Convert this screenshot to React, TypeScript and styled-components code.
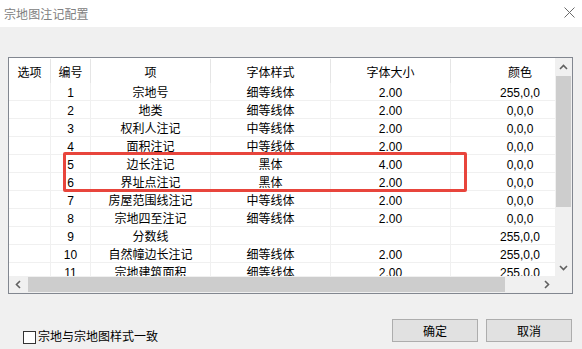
import styled, { createGlobalStyle } from "styled-components";

const GlobalStyle = createGlobalStyle`
  html, body {
    margin: 0;
    padding: 0;
    background: #f0f0f0;
  }
  * {
    box-sizing: border-box;
  }
`;

interface RowData {
  no: string;
  item: string;
  font: string;
  size: string;
  color: string;
}

const rows: RowData[] = [
  { no: "1", item: "宗地号", font: "细等线体", size: "2.00", color: "255,0,0" },
  { no: "2", item: "地类", font: "细等线体", size: "2.00", color: "0,0,0" },
  { no: "3", item: "权利人注记", font: "中等线体", size: "2.00", color: "0,0,0" },
  { no: "4", item: "面积注记", font: "中等线体", size: "2.00", color: "0,0,0" },
  { no: "5", item: "边长注记", font: "黑体", size: "4.00", color: "0,0,0" },
  { no: "6", item: "界址点注记", font: "黑体", size: "2.00", color: "0,0,0" },
  { no: "7", item: "房屋范围线注记", font: "中等线体", size: "2.00", color: "0,0,0" },
  { no: "8", item: "宗地四至注记", font: "细等线体", size: "2.00", color: "0,0,0" },
  { no: "9", item: "分数线", font: "", size: "", color: "255,0,0" },
  { no: "10", item: "自然幢边长注记", font: "细等线体", size: "2.00", color: "255,0,0" },
  { no: "11", item: "宗地建筑面积", font: "细等线体", size: "2.00", color: "255,0,0" },
];

const headers = ["选项", "编号", "项", "字体样式", "字体大小", "颜色"];

export default function App() {
  return (
    <>
      <GlobalStyle />
      <Window>
        <TitleBar>
          <Title>宗地图注记配置</Title>
          <CloseIcon width="11" height="11" viewBox="0 0 11 11">
            <path d="M0.5 0.5 L10.5 10.5 M10.5 0.5 L0.5 10.5" stroke="#6a6a6a" strokeWidth="1" />
          </CloseIcon>
        </TitleBar>

        <Body>
          <ListBox>
            <Content>
              <HeaderRow>
                {headers.map((h) => (
                  <HeaderCell key={h}>{h}</HeaderCell>
                ))}
              </HeaderRow>
              {rows.map((r) => (
                <DataRow key={r.no}>
                  <Cell />
                  <Cell>{r.no}</Cell>
                  <Cell>{r.item}</Cell>
                  <Cell>{r.font}</Cell>
                  <Cell>{r.size}</Cell>
                  <Cell>{r.color}</Cell>
                </DataRow>
              ))}
              <Highlight />
            </Content>

            <VScroll>
              <ArrowBtn>
                <svg width="9" height="6" viewBox="0 0 9 6">
                  <path d="M1 5 L4.5 1.5 L8 5" fill="none" stroke="#606060" strokeWidth="1.6" />
                </svg>
              </ArrowBtn>
              <VTrack>
                <VThumb />
              </VTrack>
              <ArrowBtn>
                <svg width="9" height="6" viewBox="0 0 9 6">
                  <path d="M1 1 L4.5 4.5 L8 1" fill="none" stroke="#606060" strokeWidth="1.6" />
                </svg>
              </ArrowBtn>
            </VScroll>

            <HScroll>
              <ArrowBtn>
                <svg width="6" height="9" viewBox="0 0 6 9">
                  <path d="M5 1 L1.5 4.5 L5 8" fill="none" stroke="#606060" strokeWidth="1.6" />
                </svg>
              </ArrowBtn>
              <HTrack>
                <HThumb />
              </HTrack>
              <ArrowBtn>
                <svg width="6" height="9" viewBox="0 0 6 9">
                  <path d="M1 1 L4.5 4.5 L1 8" fill="none" stroke="#606060" strokeWidth="1.6" />
                </svg>
              </ArrowBtn>
            </HScroll>
            <Corner />
          </ListBox>

          <Footer>
            <CheckLabel>
              <CheckBox />
              宗地与宗地图样式一致
            </CheckLabel>
            <Buttons>
              <Button>确定</Button>
              <Button>取消</Button>
            </Buttons>
          </Footer>
        </Body>
      </Window>
    </>
  );
}

// 스타일

const font = `"Liberation Sans", "Noto Sans CJK SC", sans-serif`;

const Window = styled.div`
  width: 582px;
  height: 349px;
  display: flex;
  flex-direction: column;
  background: #f0f0f0;
  font-family: ${font};
  font-size: 12px;
  color: #000;
  overflow: hidden;
`;

const TitleBar = styled.div`
  height: 27px;
  background: #fff;
  display: flex;
  align-items: center;
  justify-content: space-between;
  padding: 0 7px 1px 4px;
`;

const Title = styled.div`
  font-family: "Noto Sans CJK SC", sans-serif;
  font-size: 12px;
  color: #808080;
  letter-spacing: 0.1px;
`;

const CloseIcon = styled.svg`
  display: block;
  margin-bottom: 1px;
`;

const Body = styled.div`
  flex: 1;
  display: flex;
  flex-direction: column;
  padding: 30px 9px 0 8px;
`;

const ListBox = styled.div`
  height: 237px;
  border: 1px solid #828790;
  background: #fff;
  display: grid;
  grid-template-columns: 1fr 17px;
  grid-template-rows: 1fr 17px;
`;

const Content = styled.div`
  position: relative;
  overflow: hidden;
`;

const columns = `42px 40px 120px 120px 120px 139px`;

const HeaderRow = styled.div`
  display: grid;
  grid-template-columns: ${columns};
  height: 25px;
`;

const HeaderCell = styled.div`
  text-align: center;
  padding-top: 6px;
  line-height: 17px;
  white-space: nowrap;
  border-right: 1px solid #e5e5e5;
  margin-top: 1px;
`;

const DataRow = styled.div`
  display: grid;
  grid-template-columns: ${columns};
  height: 18px;
`;

const Cell = styled.div`
  text-align: center;
  padding-top: 1px;
  line-height: 18px;
  height: 18px;
  white-space: nowrap;
  border-right: 1px solid #f0f0f0;
  border-bottom: 1px solid #f0f0f0;
`;

const Highlight = styled.div`
  position: absolute;
  left: 54px;
  top: 94px;
  width: 404px;
  height: 40px;
  border: 3px solid #e8453c;
  border-radius: 2px;
  pointer-events: none;
`;

const VScroll = styled.div`
  display: flex;
  flex-direction: column;
  background: #f0f0f0;
`;

const HScroll = styled.div`
  display: flex;
  background: #f0f0f0;
`;

const ArrowBtn = styled.div`
  width: 17px;
  height: 17px;
  flex-shrink: 0;
  display: flex;
  align-items: center;
  justify-content: center;

  svg {
    display: block;
  }
`;

const VTrack = styled.div`
  flex: 1;
  padding-top: 1px;
`;

const VThumb = styled.div`
  width: 15px;
  margin-left: 1px;
  height: 131px;
  background: #cdcdcd;
`;

const HTrack = styled.div`
  flex: 1;
  padding-left: 2px;
`;

const HThumb = styled.div`
  height: 15px;
  margin-top: 1px;
  width: 477px;
  background: #cdcdcd;
`;

const Corner = styled.div`
  background: #f0f0f0;
`;

const Footer = styled.div`
  display: flex;
  justify-content: space-between;
  align-items: flex-start;
  margin-top: 25px;
  padding-right: 1px;
`;

const CheckLabel = styled.label`
  display: flex;
  align-items: center;
  gap: 2px;
  margin-left: 15px;
  margin-top: 12px;
  line-height: 13px;
  white-space: nowrap;
`;

const CheckBox = styled.span`
  width: 13px;
  height: 13px;
  border: 1px solid #333;
  background: #fff;
  display: inline-block;
`;

const Buttons = styled.div`
  display: flex;
  gap: 8px;
`;

const Button = styled.div`
  width: 86px;
  height: 23px;
  border: 1px solid #adadad;
  background: #e1e1e1;
  display: flex;
  align-items: center;
  justify-content: center;
  font-family: "Noto Sans CJK SC", sans-serif;
  font-size: 12px;
`;
